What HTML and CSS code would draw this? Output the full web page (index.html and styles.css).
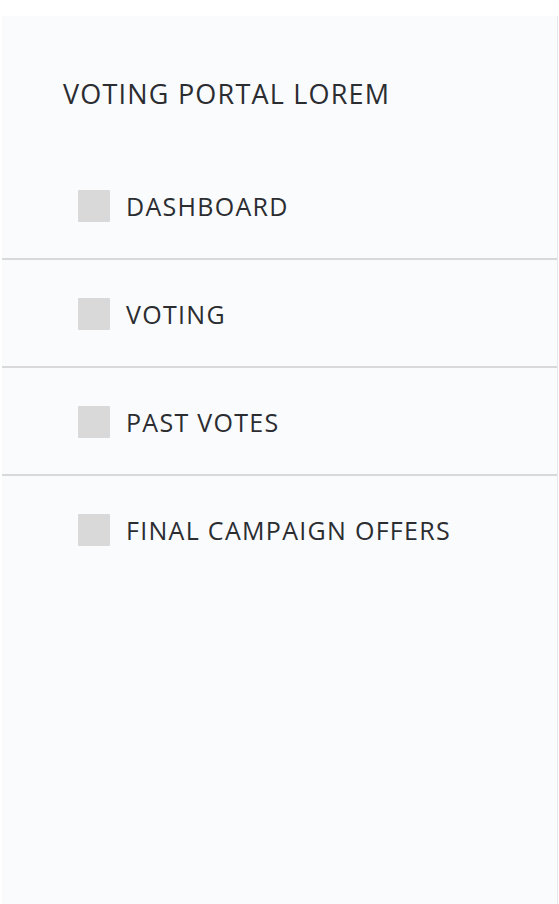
FILE: index.html
```html
<!DOCTYPE html>
<html lang="en">
<head>
<meta charset="utf-8">
<title>Voting Portal</title>
<link rel="stylesheet" href="styles.css">
</head>
<body>
<aside class="sidebar">
  <h1 class="brand">VOTING PORTAL LOREM</h1>
  <nav class="menu">
    <a class="menu-item" href="#"><span class="menu-icon"></span><span class="menu-label">DASHBOARD</span></a>
    <a class="menu-item" href="#"><span class="menu-icon"></span><span class="menu-label">VOTING</span></a>
    <a class="menu-item" href="#"><span class="menu-icon"></span><span class="menu-label">PAST VOTES</span></a>
    <a class="menu-item" href="#"><span class="menu-icon"></span><span class="menu-label">FINAL CAMPAIGN OFFERS</span></a>
  </nav>
</aside>
</body>
</html>
```
FILE: styles.css
```css
html, body {
  margin: 0;
  padding: 0;
  background: #ffffff;
}
body {
  font-family: "Open Sans", "Liberation Sans", sans-serif;
  color: #2b2d31;
}
.sidebar {
  margin: 16px 0 0 2px;
  width: 556px;
  min-height: 888px;
  background: #fafbfd;
  border-right: 1px solid #e6e7ea;
  box-sizing: border-box;
}
.brand {
  margin: 0;
  padding: 60px 0 0 61px;
  height: 136px;
  box-sizing: border-box;
  font-size: 27px;
  font-weight: 500;
  line-height: 36px;
  letter-spacing: 1.2px;
}
.menu {
  display: flex;
  flex-direction: column;
}
.menu-item {
  display: flex;
  align-items: center;
  gap: 16px;
  padding: 38px 0 36px 76px;
  border-bottom: 2px solid #d9d9db;
  color: inherit;
  text-decoration: none;
}
.menu-item:last-child {
  border-bottom: none;
}
.menu-icon {
  width: 32px;
  height: 32px;
  flex: none;
  background: #d9d9d9;
  border-radius: 1px;
}
.menu-label {
  font-size: 25px;
  line-height: 32px;
  letter-spacing: 1.3px;
}
```
